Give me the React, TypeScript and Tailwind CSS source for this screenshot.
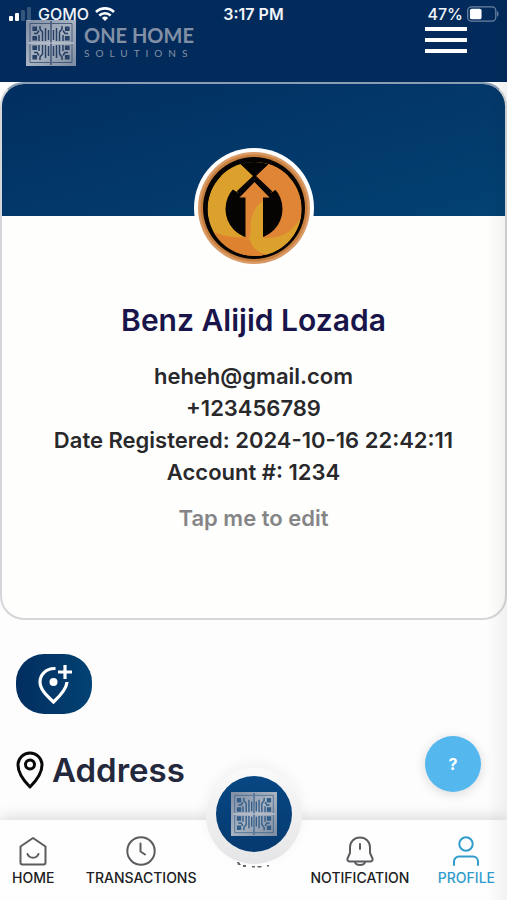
import { useState } from "react";
import type { ReactNode } from "react";

const profile = {
  name: "Benz Alijid Lozada",
  email: "heheh@gmail.com",
  phone: "+123456789",
  registered: "2024-10-16 22:42:11",
  account: "1234",
};

const DoorQuarter = ({ transform }: { transform?: string }) => (
  <g transform={transform} stroke="currentColor" fill="none">
    <path d="M4 3.500H24M4 3.500V22" strokeWidth="0.700" />
    <path d="M7.500 7.500h2.500v2.500H7.500zM7.500 17h2.500v2.500H7.500z" strokeWidth="2.200" />
    <path d="M8 13.500h3l2-3M14 6v3l2.500 3v9M19.500 8v13M22.500 10v10M13 15v6" strokeWidth="1.500" />
  </g>
);

const DoorLogo = ({ className }: { className: string }) => (
  <svg viewBox="0 0 50 46" className={className} preserveAspectRatio="none" aria-hidden="true">
    <defs>
      <linearGradient id="steel" x1="0" y1="0" x2="1" y2="1">
        <stop offset="0" stopColor="#7f8da3" />
        <stop offset="0.500" stopColor="#a9b3c1" />
        <stop offset="1" stopColor="#7d8ba0" />
      </linearGradient>
    </defs>
    <rect width="50" height="46" fill="url(#steel)" />
    <DoorQuarter />
    <DoorQuarter transform="matrix(-1 0 0 1 50 0)" />
    <DoorQuarter transform="matrix(1 0 0 -1 0 46)" />
    <DoorQuarter transform="matrix(-1 0 0 -1 50 46)" />
    <path d="M25 1v44" stroke="currentColor" strokeWidth="1.200" />
    <path d="M2 23h46" stroke="#c3cad3" strokeWidth="1.200" />
  </svg>
);

const StatusBar = () => (
  <div className="absolute inset-x-0 top-0 grid h-7 grid-cols-3 items-center pr-2 pl-2 text-base font-medium text-slate-100">
    <div className="flex items-center gap-1.5">
      <svg viewBox="0 0 24 16" className="h-4 w-6" aria-hidden="true">
        <rect x="1" y="10" width="4" height="5" rx="1" fill="#fff" />
        <rect x="7" y="7" width="4" height="8" rx="1" fill="#fff" />
        <rect x="13" y="4" width="4" height="11" rx="1" fill="#fff" opacity="0.200" />
        <rect x="19" y="1" width="4" height="14" rx="1" fill="#fff" opacity="0.200" />
      </svg>
      <span>GOMO</span>
      <svg viewBox="0 0 20 15" className="h-4 w-5" fill="none" stroke="#fff" strokeWidth="2.600" aria-hidden="true">
        <path d="M1 5.500a13 13 0 0 1 18 0M4.300 9a8.300 8.300 0 0 1 11.400 0" />
        <path d="M10 14.600 6.900 11.500a4.500 4.500 0 0 1 6.200 0z" fill="#fff" stroke="none" />
      </svg>
    </div>
    <span className="text-center font-semibold">3:17 PM</span>
    <div className="flex items-center justify-end gap-1">
      <span>47%</span>
      <svg viewBox="0 0 33 16" className="h-4 w-8" aria-hidden="true">
        <rect x="0.700" y="0.700" width="29" height="14.600" rx="4" fill="none" stroke="#6c84a3" strokeWidth="1.300" />
        <path d="M31 5c2 1 2 5 0 6z" fill="#6c84a3" />
        <rect x="3" y="2.500" width="12" height="11" rx="2" fill="#fff" />
      </svg>
    </div>
  </div>
);

const Avatar = () => (
  <svg viewBox="0 0 120 120" className="size-30" role="img" aria-label="Profile picture">
    <defs>
      <clipPath id="coin">
        <circle cx="60.500" cy="61" r="47" />
      </clipPath>
    </defs>
    <circle cx="60" cy="60" r="60" fill="#fff" />
    <circle cx="60" cy="60" r="56" fill="#d99a66" />
    <circle cx="60" cy="60" r="53.500" fill="#c9803f" />
    <circle cx="60" cy="60" r="51" fill="#050403" />
    <g clipPath="url(#coin)">
      <circle cx="60.500" cy="61" r="47" fill="#dca02c" />
      <path d="M60 0h60v120H60z" fill="#df8535" />
      {/* lower sweeps */}
      <path d="M12 79c12 9 26 11 39.500 10l9 3 20 26H30z" fill="#df8230" />
      <path d="M108 66C101 83 88 91 69 90L56 91c1 9 9 15 22 17h30z" fill="#dca02c" />
      {/* inner counter */}
      <ellipse cx="60" cy="61" rx="28.500" ry="29.500" fill="#050403" />
      {/* notch between the two arrow heads */}
      <path d="M38 6 44 14 60.500 29.500 77 14 83 6z" fill="#050403" />
      <path d="M44 14 60 29.500 44.500 45 30 36 24 22z" fill="#dca02c" />
      <path d="M77 14 61 29.500 76.500 45 91 36 97 22z" fill="#df8535" />
    </g>
    <path d="M44 44.500 60.500 29 77 44.500" fill="none" stroke="#050403" strokeWidth="3.500" />
    <path d="M60.500 34 75.500 49.500H69V92H51.500V49.500h-6z" fill="#df8535" />
    <path d="M69 53c-10 6-14 20-12 30l-2 8 5 6 9-1z" fill="#dca02c" />
  </svg>
);

const HomeIcon = () => (
  <>
    <path d="M15 2 27.500 10.500v16a2 2 0 0 1-2 2h-21a2 2 0 0 1-2-2v-16z" />
    <path d="M9.500 18c2 5 9 5 11 0" />
  </>
);

const ClockIcon = () => (
  <>
    <circle cx="15" cy="15" r="13.700" />
    <path d="M14.500 7.500v8l4.500 3" />
  </>
);

const BellIcon = () => (
  <>
    <path d="M5 17V11.500C5 5.500 9.500 1.500 15 1.500s10 4 10 10V17l2.500 5.500c.5 1.500-.3 2.500-2 3H4.500c-1.700-.5-2.500-1.500-2-3z" />
    <path d="M10 26c1 4 9 4 10 0M15 8v5" />
  </>
);

const PersonIcon = () => (
  <>
    <circle cx="15" cy="8" r="6.700" />
    <path d="M3 29v-3.500a5 5 0 0 1 5-5h14a5 5 0 0 1 5 5V29" />
  </>
);

const NavItem = ({
  label,
  active = false,
  children,
}: {
  label: string;
  active?: boolean;
  children: ReactNode;
}) => (
  <a
    href="#"
    aria-current={active ? "page" : undefined}
    className={
      active
        ? "flex flex-col items-center gap-1 text-[#309bcc]"
        : "flex flex-col items-center gap-1 text-[#202022]"
    }
  >
    <svg
      viewBox="0 0 30 30"
      className="size-7.5"
      fill="none"
      stroke={active ? "currentColor" : "#5c5c60"}
      strokeWidth="2"
      strokeLinecap="round"
      strokeLinejoin="round"
      aria-hidden="true"
    >
      {children}
    </svg>
    <span className="text-sm leading-4 font-medium">{label}</span>
  </a>
);

const Header = () => {
  const [open, setOpen] = useState(false);

  return (
    <header className="relative bg-[#022b5c]">
      <div className="flex h-20.5 items-start justify-between pt-5 pr-10 pl-6.5">
        <a href="#" className="flex items-start gap-2 text-[#8290a5]">
          <DoorLogo className="h-11.5 w-12.5 text-[#263f64]" />
          <span className="flex flex-col gap-0.5 pt-1.25 font-['Lato',sans-serif]">
            <span className="text-xl leading-5 font-bold">ONE HOME</span>
            <span className="text-[10px] leading-3 tracking-[6px]">SOLUTIONS</span>
          </span>
        </a>
        <button
          type="button"
          aria-label="Menu"
          aria-expanded={open}
          onClick={() => setOpen(!open)}
          className="flex flex-col gap-1.75 pt-1.75"
        >
          <span className="h-1 w-10.5 bg-white" />
          <span className="h-1 w-10.5 bg-white" />
          <span className="h-1 w-10.5 bg-white" />
        </button>
      </div>
      <StatusBar />
    </header>
  );
};

const ProfileCard = () => (
  <section className="overflow-hidden rounded-3xl border-2 border-[#d4d6d8] border-t-[#8b9db3] bg-[#fefefd] pb-21">
    <div className="h-33 bg-linear-to-br from-[#022e60] to-[#034273]" />
    <div className="-mt-17 flex justify-center">
      <Avatar />
    </div>
    <div className="flex flex-col items-center text-center">
      <h1 className="mt-8 text-3xl leading-10 font-semibold text-[#19154a]">{profile.name}</h1>
      <div className="mt-5 text-[22px] leading-8 font-semibold text-[#29292c]">
        <p>{profile.email}</p>
        <p>{profile.phone}</p>
        <p>Date Registered: {profile.registered}</p>
        <p>Account #: {profile.account}</p>
      </div>
      <button type="button" className="mt-3.5 text-[22px] leading-8 font-semibold text-[#858587]">
        Tap me to edit
      </button>
    </div>
  </section>
);

const BottomNav = () => (
  <nav className="relative mt-auto bg-[#fefefe] pt-4 pb-3.5 shadow-[0_-3px_14px_rgba(0,0,0,0.14)]">
    <div className="flex items-center px-3">
      <div className="flex flex-1 justify-between pr-3.5">
        <NavItem label="HOME">
          <HomeIcon />
        </NavItem>
        <NavItem label="TRANSACTIONS">
          <ClockIcon />
        </NavItem>
      </div>
      <div className="w-24" />
      <div className="flex flex-1 justify-between pl-1">
        <NavItem label="NOTIFICATION">
          <BellIcon />
        </NavItem>
        <NavItem label="PROFILE" active>
          <PersonIcon />
        </NavItem>
      </div>
    </div>
    {/* Center button */}
    <div className="absolute -top-13 left-1/2 flex size-24 -translate-x-1/2 items-center justify-center rounded-full bg-linear-to-b from-[#fafafa] to-[#e5e5e7] pb-1 shadow-[0_-4px_14px_rgba(0,0,0,0.05)]">
      <a
        href="#"
        aria-label="One Home"
        className="flex size-19 items-center justify-center rounded-full bg-linear-to-b from-[#074783] to-[#063a70]"
      >
        <DoorLogo className="h-11 w-11.5 text-[#315d88]" />
      </a>
    </div>
    <svg viewBox="0 0 34 6" className="absolute top-10.5 left-1/2 h-1.5 w-8.5 -translate-x-1/2" fill="#66666b" aria-hidden="true">
      <path d="M0 0h2l2 3H1zM6 3h3v2H6zM15 4h3v1.500h-3zM20 4h5l-1 1.500h-3zM30 3h2v1.500h-2z" />
    </svg>
  </nav>
);

export default function App() {
  return (
    <div className="relative flex min-h-screen flex-col bg-[#fdfdfd] font-['Inter',sans-serif]">
      <Header />
      <main className="relative">
        <ProfileCard />
        <div className="px-4 pt-8.5">
          <button
            type="button"
            aria-label="Add address"
            className="flex h-15 w-19 items-center justify-center rounded-[28px] bg-linear-to-r from-[#022e60] to-[#034273]"
          >
            <svg viewBox="0 0 36 40" className="h-10 w-9" fill="none" stroke="#fff" strokeWidth="3.200" aria-hidden="true">
              <path d="M19.500 4.500H18C10 4.500 4 11 4 18c0 7 6 13 13.500 20C25 31 30.500 25 31 18" />
              <path d="M29 1v14M22 8h14" />
              <circle cx="17.500" cy="18" r="4" fill="#fff" stroke="none" />
            </svg>
          </button>
          <div className="mt-8 flex items-center gap-2">
            <svg viewBox="0 0 28 38" className="h-9.5 w-7" fill="none" stroke="#08080a" strokeWidth="3" strokeLinejoin="round" aria-hidden="true">
              <path d="M14 2C7.400 2 2 7.400 2 14c0 8.500 6 16 12 22 6-6 12-13.500 12-22C26 7.400 20.600 2 14 2z" />
              <circle cx="14" cy="13.500" r="4.500" />
            </svg>
            <h2 className="text-[33px] leading-12 font-semibold text-[#24283c]">Address</h2>
          </div>
        </div>
        <button
          type="button"
          aria-label="Help"
          className="absolute right-6.5 bottom-0.5 size-14 rounded-full bg-[#54b8ef] font-bold text-white shadow-[0_2px_12px_rgba(0,0,0,0.15)]"
        >
          ?
        </button>
      </main>
      <BottomNav />
      {/* right edge fade */}
      <div className="pointer-events-none absolute inset-y-0 right-0 w-5 bg-linear-to-r from-transparent to-black/5" />
    </div>
  );
}
